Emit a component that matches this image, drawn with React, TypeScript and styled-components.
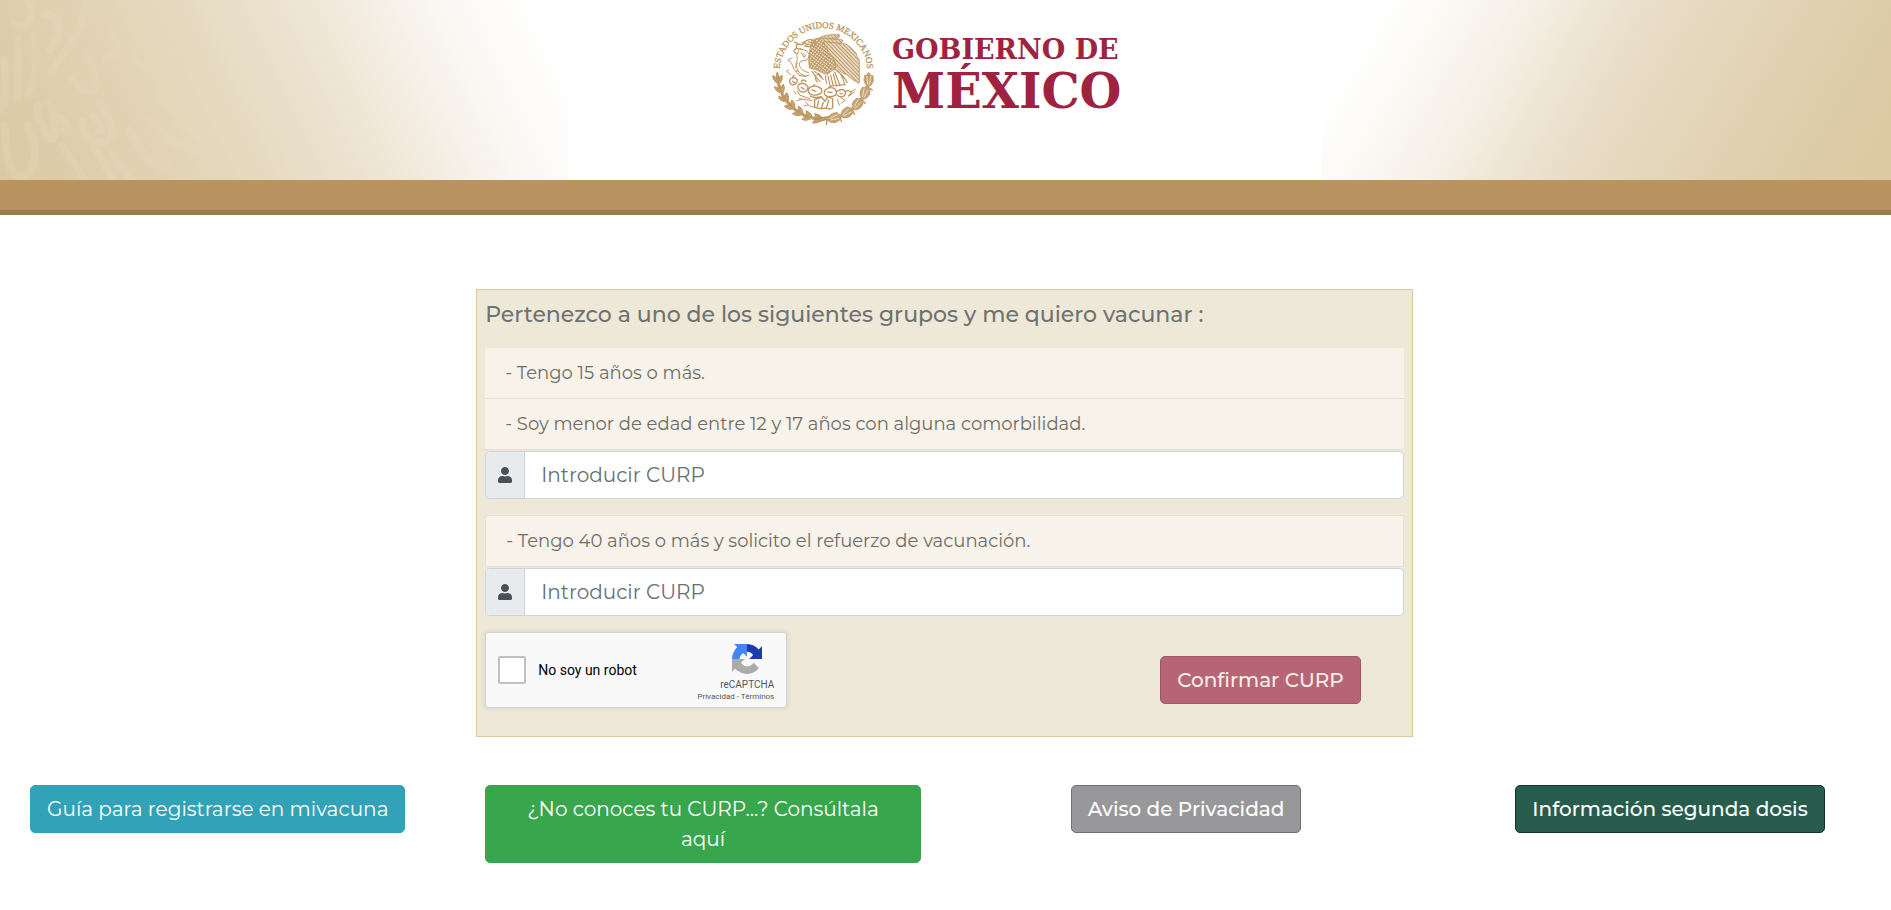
import React from "react";
import styled, { createGlobalStyle } from "styled-components";
import { FaUser } from "react-icons/fa";

const GlobalStyle = createGlobalStyle`
  *, *::before, *::after { box-sizing: border-box; }
  body {
    margin: 0;
    background: #fff;
    color: #6f7271;
    font-family: Montserrat, Inter, "Open Sans", sans-serif;
    font-size: 18px;
  }
`;

const Header = styled.header`
  border-bottom: 5px solid #9b7c4e;
`;

const Banner = styled.div`
  display: grid;
  grid-template-columns: minmax(0, 568px) minmax(380px, 1fr) minmax(0, 570px);
  height: 180px;
`;

const Wash = styled.div<{ $side: "left" | "right" }>`
  overflow: hidden;
  background: ${({ $side }) =>
    $side === "left"
      ? "linear-gradient(64deg, #dccaa6 0%, #decdaa 13%, #e2d4b6 29%, #e6dbc2 42%, #ece2cf 55%, #f3ebdf 66%, #f9f7f2 79%, #fff 95%)"
      : "linear-gradient(120deg, #fff 9%, #faf9f4 20%, #f5eee4 33%, #eee6d4 41%, #e8dcc6 52%, #e2d4b6 68%, #decda9 83%, #dcc9a4 100%)"};
`;

const LogoArea = styled.div`
  display: flex;
  justify-content: center;
  align-items: flex-start;
  padding: 10px 0 0 10px;
`;

const GoldBar = styled.div`
  height: 30px;
  background: #b99461;
`;

const Main = styled.main`
  padding-right: 2px;
`;

const Card = styled.form`
  width: calc(50% - 8px);
  min-width: 560px;
  margin: 74px auto 0;
  padding: 8px 8px 28px;
  border: 1px solid #dcc9a3;
  background: #eee8d8;
`;

const Heading = styled.h1`
  margin: 0 0 16px;
  font-size: 22px;
  font-weight: 500;
  line-height: 34px;
`;

const GroupList = styled.ul`
  margin: 0;
  padding: 0;
  list-style: none;
`;

const GroupItem = styled.li<{ $outlined?: boolean }>`
  padding: 12px 20px;
  background: #f7f2ea;
  border: 0 solid #e4e0d9;
  border-width: ${({ $outlined }) => ($outlined ? "1px" : "0 0 1px")};
  color: #706d65;
  line-height: 26px;
`;

const InputGroup = styled.div`
  display: flex;
  height: 48px;
  margin: 1px 0 16px;
  border: 1px solid #ced4da;
  border-radius: 5px;
  background: #fff;
  overflow: hidden;
`;

const InputIcon = styled.label`
  display: flex;
  align-items: center;
  justify-content: center;
  width: 39px;
  border-right: 1px solid #ced4da;
  background: #e8ebed;
  color: #495057;
  font-size: 16px;
`;

const Input = styled.input`
  flex: 1;
  min-width: 0;
  padding: 0 16px;
  border: 0;
  outline: 0;
  background: transparent;
  color: #495057;
  font: inherit;
  font-size: 20px;
  &::placeholder { color: #666f77; opacity: 1; }
`;

const Actions = styled.div`
  display: flex;
  justify-content: space-between;
  align-items: flex-start;
  padding-right: 43px;
`;

const Captcha = styled.div`
  display: flex;
  justify-content: space-between;
  width: 302px;
  height: 76px;
  padding: 0 12px;
  border: 1px solid #d3d3d3;
  border-radius: 3px;
  background: #f9f9f9;
  box-shadow: 0 0 4px 1px rgba(0, 0, 0, 0.08);
  font-family: Roboto, sans-serif;
`;

const CaptchaCheck = styled.label`
  display: flex;
  align-items: center;
  gap: 12px;
  color: #000;
  font-size: 14px;
`;

const CheckBox = styled.input`
  appearance: none;
  width: 28px;
  height: 28px;
  margin: 0;
  border: 2px solid #c1c1c1;
  border-radius: 2px;
  background: #fff;
`;

const CaptchaBrand = styled.div`
  display: flex;
  flex-direction: column;
  align-items: flex-end;
  padding-top: 11px;
  color: #555;
  font-size: 10px;
  line-height: 12px;
  svg { margin: 0 12px 5px 0; }
`;

const CaptchaLinks = styled.div`
  font-size: 8px;
  line-height: 12px;
  a { color: #555; text-decoration: none; }
`;

const tones = {
  wine: ["#b76576", "#9a5868", "#f7efe6"],
  blue: ["#31a2b8", "#31a2b8", "#fff"],
  green: ["#38a64d", "#38a64d", "#fff"],
  gray: ["#98989a", "#707073", "#fff"],
  pine: ["#285c4d", "#13322b", "#fff"],
};

const Button = styled.button<{ $tone: keyof typeof tones; $strong?: boolean; $wide?: boolean }>`
  padding: 8px ${({ $wide }) => ($wide ? "32px" : "16px")};
  border: 1px solid ${({ $tone }) => tones[$tone][1]};
  border-radius: 5px;
  background: ${({ $tone }) => tones[$tone][0]};
  color: ${({ $tone }) => tones[$tone][2]};
  font-family: inherit;
  font-size: 20px;
  font-weight: ${({ $strong }) => ($strong ? 500 : 400)};
  line-height: 30px;
  text-align: center;
  text-decoration: none;
  cursor: pointer;
`;

const ConfirmSlot = styled.div`
  padding-top: 24px;
`;

const Links = styled.nav`
  display: grid;
  grid-template-columns: 455fr 436fr 530fr 438fr;
  align-items: start;
  justify-items: center;
  margin-top: 48px;
  padding-left: 30px;
  > :first-child { justify-self: start; }
  > :nth-child(2) { justify-self: stretch; }
`;

function Swirls() {
  return (
    <svg width="570" height="180" viewBox="0 0 570 180" fill="none" stroke="#e8dcc2" strokeLinecap="round" strokeWidth="8" opacity="0.25" aria-hidden="true">
      <path d="M28 0c10 16-2 30-14 24M46 14c20 4 14 20 4 36M85 0c0 34-20 50-34 72M18 40v58M34 36c4 22 2 40-6 60M4 60c2 24 4 36-4 50" />
      <path d="M4 126c4 20 0 48 16 50s20-28 8-50M38 106c-2 12 6 26 12 32s8-18 0-34M60 118c10 8 12 20 4 12M72 78c10 16 26 18 24 2s-8-18-8-22" />
      <path d="M82 122c0 14 14 28 26 18s-4-28-8-36M92 116c8 8 12 14 8 14M106 58c10 0 14-16 6-24M134 58c14 18 28 12 36-6M130 130c10 20 24 44 38 34M148 118c16 20 40 38 56 30" />
      <path d="M62 146l22 32M92 142l20 36M112 156l20 24M160 98c20 26 34 44 50 36" />
      <path opacity="0.4" d="M176 76c12 28 28 50 50 60M196 40c22 34 40 66 66 82M280 138c-4 16 4 30 8 42M232 152c0 12 4 20 8 28" />
    </svg>
  );
}

/* National coat of arms: lettered arc, eagle with snake on a nopal, wreath. */
function Logo() {
  return (
    <svg width="380" height="130" viewBox="0 0 380 130" role="img" aria-label="Gobierno de México">
      <defs>
        <path id="arc" d="M19.500 68A44 44 0 0 1 19.500 62A44 44 0 0 1 107.500 62A44 44 0 0 1 107.500 68" />
        <pattern id="wingFeathers" width="8" height="8" patternUnits="userSpaceOnUse" patternTransform="rotate(-44)">
          <path d="M4 0v8" stroke="#bc955c" strokeWidth="4.600" />
        </pattern>
        <pattern id="bodyFeathers" width="8" height="8" patternUnits="userSpaceOnUse" patternTransform="rotate(36)">
          <path d="M4 0v8M0 2h8" stroke="#bc955c" strokeWidth="3.600" />
        </pattern>
      </defs>
      <text fill="#bc955c" stroke="#bc955c" strokeWidth="0.3" fontFamily="'Liberation Serif', serif" fontSize="9">
        <textPath href="#arc" startOffset="50%" textAnchor="middle">ESTADOS UNIDOS MEXICANOS</textPath>
      </text>
      <g transform="scale(0.3333)" fill="none" stroke="#bc955c" strokeWidth="3.500" strokeLinecap="round" strokeLinejoin="round">
        {/* wreath: oak on the left, laurel on the right */}
        {[0, 1, 2, 3, 4, 5, 6].map((i) => (
          <g key={`l${i}`} transform={`rotate(${-2 - i * 12.5} 190 190)`}>
            <path d="M50 214q-12-8-12-22q12 4 14 18M54 214q0-18 12-22q2 14-8 24M52 202q-6-10 0-20q6 10 2 20" fill="#c6a473" strokeWidth="3" />
            <path d="M53 224v-26" strokeWidth="3" />
          </g>
        ))}
        {[0, 1, 2, 3, 4].map((i) => (
          <g key={`r${i}`} transform={`rotate(${2 + i * 17} 190 190)`}>
            <path d="M315 192q2-4 4 0l4-7q3-4 6 0l4 7q2-4 6 0q6 16-4 28l-8 6l-8-6q-11-12-4-28z" fill="#c6a473" strokeWidth="2" />
            <path d="M321 194l3 24M333 194l-4 24" stroke="#fff" strokeWidth="1.800" />
            <path d="M316 232l10-4l12 6" strokeWidth="4" />
          </g>
        ))}
        {/* raised wing */}
        <path fill="url(#wingFeathers)" strokeWidth="2.500" d="M176 84q22-12 62-10q4 8-10 14q16-2 22 4q-2 6-12 8q22 0 28 8q8 4 14 12q10 8 12 20q8 10 6 24v54q-4 6-8-4q-2 6-8-4q-4 4-8-6q-6 2-10-8q-20-4-34-24z" />
        <path d="M182 84l46 4M188 94l50 6M236 76q-8 12-30 10" strokeWidth="2.500" />
        {/* body and folded wing */}
        <path fill="#fff" stroke="none" d="M156 92q20-16 34 2l26 46l34 84q-34 12-72-2l-30-44q-8-40 8-86z" />
        <path fill="url(#bodyFeathers)" strokeWidth="2.500" d="M156 92q20-16 34 2l20 38q20 22 18 42l-28 20q-18-8-30-14l-22-6q-6-36 8-82z" />
        <path d="M222 176q24 8 32 48M224 186l16 40M220 192l10 36M212 196l8 32M204 198l6 28M232 184q18 12 30 34M196 198l4 22M156 184q8 16 24 30M164 184l26 24M176 190l10 12M214 228l42-4M168 196q-4 12 4 20" />
        {/* head and snake */}
        <path d="M128 104q10-16 26-15q14 4 12 18M126 104q-14-4-18 4q2 12 14 8M128 98l10-4M146 96l8 2M134 108l14 2M112 100l-8-4M108 116q-12 6 0 14M144 102l14 6M136 100l6 4" strokeWidth="4" />
        <path d="M122 118q20 0 26 16q0 16-16 18q-16 0-14 14q4 16 28 22M116 122q-10 14-4 28q-12 20 10 42q14 10 26 4M96 144l-12 6l10 8l8 20l16 18" strokeWidth="3" />
        <path d="M132 130q8 4 2 12M112 160l-6 12M116 182l-8 2M86 180l-6 4l12 10M124 128l8 14M118 196l20 4" strokeWidth="3" />
        {/* nopal on its rock */}
        <g strokeWidth="4">
          <path d="M90 208q12-10 22 2q-2 16-16 14q-10-4-6-16M114 226q14-14 30 4q0 16-18 16q-14-4-12-20M148 234q10-10 30-2q14 8 4 18q-18 10-32 2q-8-8-2-18M124 214q6-8 14 0" />
          <path d="M196 240q12-12 28-4q10 10 2 20q-18 8-30 0q-6-8 0-16M232 244q14-10 22-2q6 8-2 16q-12 6-20-2M256 246q10-8 16 0q4 8-6 12M98 214l6 4M124 232l8 6M156 240l12 4M204 246l12 2M98 202l4-6M160 228l4-4M206 232l8-4M240 250l6 2" />
          <path d="M272 246l14-8M266 256l18-10M112 244l8 12l30 10M108 252l-6-8M118 266l38 6M136 276q10 14 28 16M242 262l14 10M232 268l6 18M244 280l10-8M110 272l16-4M142 286l-10 2" strokeWidth="3" />
          <path d="M164 268l22-6l8 12l10-14l14 6v28q-10 6-20 0q-16 4-34-2zM176 272l-4 18M190 278l-6 16M206 270l-6 22M150 258q16 8 34 2" />
        </g>
        <path d="M170 328l38-8M174 318l34 12M178 334l20-6" strokeWidth="5" />
      </g>
      <g fill="#9f2241" fontFamily="'DejaVu Serif', serif" fontWeight="700">
        <text x="132" y="49" fontSize="27">GOBIERNO DE</text>
        <text x="132" y="98" fontSize="48">MÉXICO</text>
      </g>
    </svg>
  );
}

function CaptchaLogo() {
  return (
    <svg width="30" height="30" viewBox="0 0 64 64" aria-hidden="true">
      <path fill="#1c3aa9" d="M64 31.955l-.033-1.370V4.687l-7.160 7.160C50.948 4.674 42.033.093 32.050.093c-10.400 0-19.622 4.960-25.458 12.640l11.736 11.860a15.550 15.550 0 0 1 4.754-5.334c2.050-1.600 4.952-2.906 8.968-2.906.485 0 .860.057 1.135.163 4.976.393 9.288 3.140 11.828 7.124l-8.307 8.307L64 31.953" />
      <path fill="#4285f4" d="M31.862.094l-1.370.033H4.594l7.160 7.160C4.580 13.147 0 22.060 0 32.046c0 10.400 4.960 19.622 12.640 25.458L24.500 45.768a15.550 15.550 0 0 1-5.334-4.754c-1.600-2.050-2.906-4.952-2.906-8.968 0-.485.057-.860.163-1.135.393-4.976 3.140-9.288 7.124-11.828l8.307 8.307L31.860.095" />
      <path fill="#ababab" d="M.001 32.045l.033 1.370v25.898l7.160-7.160c5.860 7.173 14.774 11.754 24.760 11.754 10.400 0 19.622-4.960 25.458-12.640l-11.736-11.860a15.550 15.550 0 0 1-4.754 5.334c-2.050 1.600-4.952 2.906-8.968 2.906-.485 0-.860-.057-1.135-.163-4.976-.393-9.288-3.140-11.828-7.124l8.307-8.307c-10.522.040-22.400.066-27.295-.005" />
    </svg>
  );
}

function CurpField({ id }: { id: string }) {
  return (
    <InputGroup>
      <InputIcon htmlFor={id} aria-label="CURP">
        <FaUser size={16} />
      </InputIcon>
      <Input id={id} type="text" placeholder="Introducir CURP" />
    </InputGroup>
  );
}

export default function App() {
  return (
    <>
      <GlobalStyle />
      <Header>
        <Banner>
          <Wash $side="left">
            <Swirls />
          </Wash>
          <LogoArea>
            <Logo />
          </LogoArea>
          <Wash $side="right" />
        </Banner>
        <GoldBar />
      </Header>
      <Main>
        <Card onSubmit={(e) => e.preventDefault()}>
          <Heading>Pertenezco a uno de los siguientes grupos y me quiero vacunar :</Heading>
          <GroupList>
            <GroupItem>- Tengo 15 años o más.</GroupItem>
            <GroupItem>- Soy menor de edad entre 12 y 17 años con alguna comorbilidad.</GroupItem>
          </GroupList>
          <CurpField id="curp" />
          <GroupList>
            <GroupItem $outlined>- Tengo 40 años o más y solicito el refuerzo de vacunación.</GroupItem>
          </GroupList>
          <CurpField id="curp-refuerzo" />
          <Actions>
            <Captcha>
              <CaptchaCheck>
                <CheckBox type="checkbox" />
                No soy un robot
              </CaptchaCheck>
              <CaptchaBrand>
                <CaptchaLogo />
                <span>reCAPTCHA</span>
                <CaptchaLinks>
                  <a href="#privacidad">Privacidad</a> - <a href="#terminos">Términos</a>
                </CaptchaLinks>
              </CaptchaBrand>
            </Captcha>
            <ConfirmSlot>
              <Button type="submit" $tone="wine" $strong>Confirmar CURP</Button>
            </ConfirmSlot>
          </Actions>
        </Card>
        <Links>
          <Button as="a" href="#guia" $tone="blue">Guía para registrarse en mivacuna</Button>
          <Button as="a" href="#consulta" $tone="green" $wide>¿No conoces tu CURP...? Consúltala aquí</Button>
          <Button type="button" $tone="gray" $strong>Aviso de Privacidad</Button>
          <Button type="button" $tone="pine" $strong>Información segunda dosis</Button>
        </Links>
      </Main>
    </>
  );
}
